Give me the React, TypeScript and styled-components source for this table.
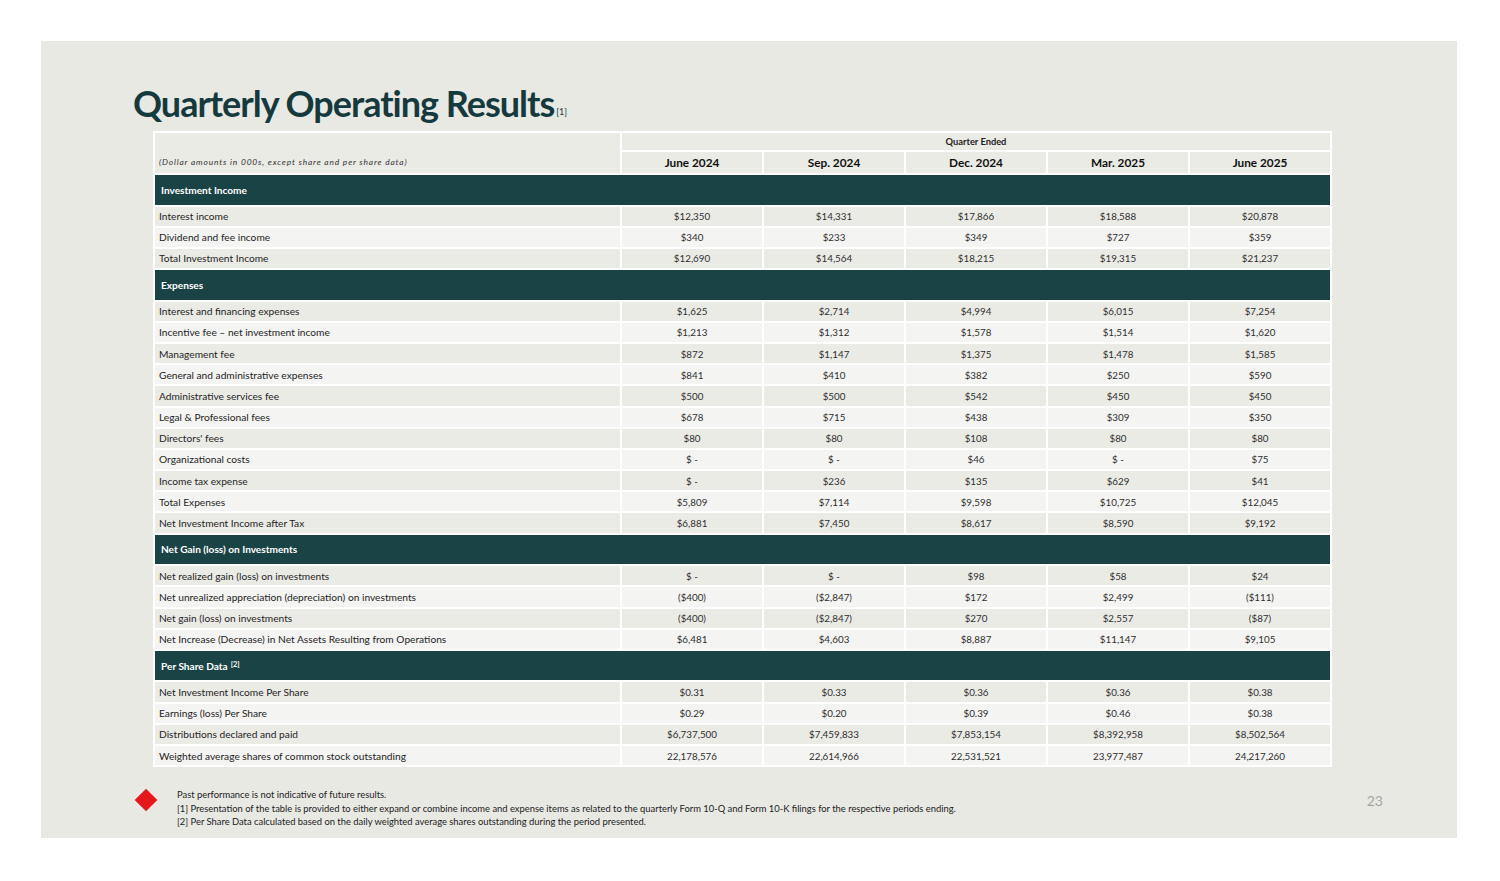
import React from "react";
import styled, { createGlobalStyle } from "styled-components";

const Global = createGlobalStyle`
  html, body { margin: 0; padding: 0; background: #ffffff; }
  body { font-family: Lato, "Open Sans", sans-serif; }
`;

const Page = styled.div`
  padding: 41px 0 0 41px;
`;

const Slide = styled.div`
  width: 1416px;
  height: 797px;
  box-sizing: border-box;
  background: #e9e9e4;
  padding: 40px 0 0 92px;
  display: flex;
  flex-direction: column;
`;

const Title = styled.h1`
  margin: 0;
  height: 44px;
  font-family: Lato, sans-serif;
  font-weight: 700;
  font-size: 36px;
  line-height: 44px;
  letter-spacing: -1px;
  color: #153a3e;
`;

const TitleSup = styled.span`
  font-size: 9px;
  line-height: 0;
  letter-spacing: 0;
  font-weight: 400;
  margin-left: 2px;
  vertical-align: 2px;
`;

const Table = styled.div`
  margin: 6px 0 0 20px;
  width: 1179px;
  box-sizing: border-box;
  background: #ffffff;
  padding: 2px;
  display: grid;
  grid-template-columns: 465px repeat(5, 140px);
  column-gap: 2px;
  row-gap: 2px;
`;

const Corner = styled.div`
  grid-row: span 2;
  background: #ebebe6;
  display: flex;
  align-items: flex-end;
  padding: 0 0 6px 4px;
  font-size: 8.4px;
  font-style: italic;
  letter-spacing: 0.85px;
  color: #333;
`;

const QuarterEnded = styled.div`
  grid-column: span 5;
  height: 17px;
  background: #ebebe6;
  display: flex;
  align-items: center;
  justify-content: center;
  font-size: 9.3px;
  font-weight: 700;
  color: #222;
`;

const DateHead = styled.div`
  height: 21px;
  background: #ebebe6;
  display: flex;
  align-items: center;
  justify-content: center;
  font-size: 11.8px;
  font-weight: 700;
  color: #111;
`;

const Section = styled.div`
  grid-column: 1 / -1;
  height: 29.5px;
  background: #1a4346;
  display: flex;
  align-items: center;
  padding-left: 6px;
  font-size: 10.1px;
  font-weight: 700;
  color: #ffffff;
`;

const SectionSup = styled.sup`
  font-size: 7.5px;
  margin-left: 3px;
  position: relative;
  top: -1px;
`;

const Cell = styled.div<{ $shade: boolean; $label?: boolean }>`
  height: 19.2px;
  background: ${(p) => (p.$shade ? "#ebebe6" : "#f4f4f2")};
  display: flex;
  align-items: center;
  justify-content: ${(p) => (p.$label ? "flex-start" : "center")};
  padding-left: ${(p) => (p.$label ? "4px" : "0")};
  font-size: ${(p) => (p.$label ? "10.2px" : "9.8px")};
  color: ${(p) => (p.$label ? "#1e1e1e" : "#2e2e2e")};
  white-space: nowrap;
`;

const Footer = styled.div`
  display: flex;
  align-items: flex-start;
  margin-top: 21px;
  padding-left: 5px;
  width: 1245px;
`;

const Diamond = styled.div`
  width: 16px;
  height: 16px;
  background: #e8161c;
  transform: rotate(45deg);
  margin: 4px 0 0 0;
  flex: none;
`;

const Notes = styled.div`
  margin-left: 23px;
  font-size: 9.4px;
  line-height: 13.5px;
  color: #222;
`;

const PageNum = styled.div`
  margin-left: auto;
  margin-top: 4px;
  font-size: 14px;
  color: #a5a5a2;
`;

type Row = [string, string[]];
type Group = { title: string; sup?: string; rows: Row[] };

const groups: Group[] = [
  {
    title: "Investment Income",
    rows: [
      ["Interest income", ["$12,350", "$14,331", "$17,866", "$18,588", "$20,878"]],
      ["Dividend and fee income", ["$340", "$233", "$349", "$727", "$359"]],
      ["Total Investment Income", ["$12,690", "$14,564", "$18,215", "$19,315", "$21,237"]],
    ],
  },
  {
    title: "Expenses",
    rows: [
      ["Interest and financing expenses", ["$1,625", "$2,714", "$4,994", "$6,015", "$7,254"]],
      ["Incentive fee \u2013  net investment income", ["$1,213", "$1,312", "$1,578", "$1,514", "$1,620"]],
      ["Management  fee", ["$872", "$1,147", "$1,375", "$1,478", "$1,585"]],
      ["General and administrative expenses", ["$841", "$410", "$382", "$250", "$590"]],
      ["Administrative services fee", ["$500", "$500", "$542", "$450", "$450"]],
      ["Legal & Professional fees", ["$678", "$715", "$438", "$309", "$350"]],
      ["Directors' fees", ["$80", "$80", "$108", "$80", "$80"]],
      ["Organizational costs", ["$ -", "$ -", "$46", "$ -", "$75"]],
      ["Income tax expense", ["$ -", "$236", "$135", "$629", "$41"]],
      ["Total Expenses", ["$5,809", "$7,114", "$9,598", "$10,725", "$12,045"]],
      ["Net Investment Income after Tax", ["$6,881", "$7,450", "$8,617", "$8,590", "$9,192"]],
    ],
  },
  {
    title: "Net Gain (loss) on Investments",
    rows: [
      ["Net realized gain (loss) on investments", ["$ -", "$ -", "$98", "$58", "$24"]],
      ["Net unrealized appreciation (depreciation) on investments", ["($400)", "($2,847)", "$172", "$2,499", "($111)"]],
      ["Net gain (loss) on investments", ["($400)", "($2,847)", "$270", "$2,557", "($87)"]],
      ["Net Increase (Decrease) in Net Assets Resulting from Operations", ["$6,481", "$4,603", "$8,887", "$11,147", "$9,105"]],
    ],
  },
  {
    title: "Per Share Data",
    sup: "[2]",
    rows: [
      ["Net Investment Income Per Share", ["$0.31", "$0.33", "$0.36", "$0.36", "$0.38"]],
      ["Earnings (loss) Per Share", ["$0.29", "$0.20", "$0.39", "$0.46", "$0.38"]],
      ["Distributions declared and paid", ["$6,737,500", "$7,459,833", "$7,853,154", "$8,392,958", "$8,502,564"]],
      ["Weighted average shares of common stock outstanding", ["22,178,576", "22,614,966", "22,531,521", "23,977,487", "24,217,260"]],
    ],
  },
];

const quarters = ["June  2024", "Sep. 2024", "Dec. 2024", "Mar. 2025", "June  2025"];

export default function App() {
  return (
    <>
      <Global />
      <Page>
        <Slide>
          <Title>
            Quarterly Operating Results<TitleSup>[1]</TitleSup>
          </Title>
          <Table>
            <Corner>(Dollar amounts in 000s, except share and per share data)</Corner>
            <QuarterEnded>Quarter Ended</QuarterEnded>
            {quarters.map((q) => (
              <DateHead key={q}>{q}</DateHead>
            ))}
            {groups.map((g) => (
              <React.Fragment key={g.title}>
                <Section>
                  {g.title}
                  {g.sup && <SectionSup>{g.sup}</SectionSup>}
                </Section>
                {g.rows.map(([label, vals], i) => (
                  <React.Fragment key={label}>
                    <Cell $shade={i % 2 === 0} $label>
                      {label}
                    </Cell>
                    {vals.map((v, j) => (
                      <Cell key={j} $shade={i % 2 === 0}>
                        {v}
                      </Cell>
                    ))}
                  </React.Fragment>
                ))}
              </React.Fragment>
            ))}
          </Table>
          <Footer>
            <Diamond />
            <Notes>
              <div>Past performance is not indicative of future results.</div>
              <div>
                [1] Presentation of the table is provided to either expand or combine income and expense items as related to the quarterly Form 10-Q and Form 10-K filings for the respective periods ending.
              </div>
              <div>[2] Per Share Data calculated based on the daily weighted average shares outstanding during the period presented.</div>
            </Notes>
            <PageNum>23</PageNum>
          </Footer>
        </Slide>
      </Page>
    </>
  );
}
